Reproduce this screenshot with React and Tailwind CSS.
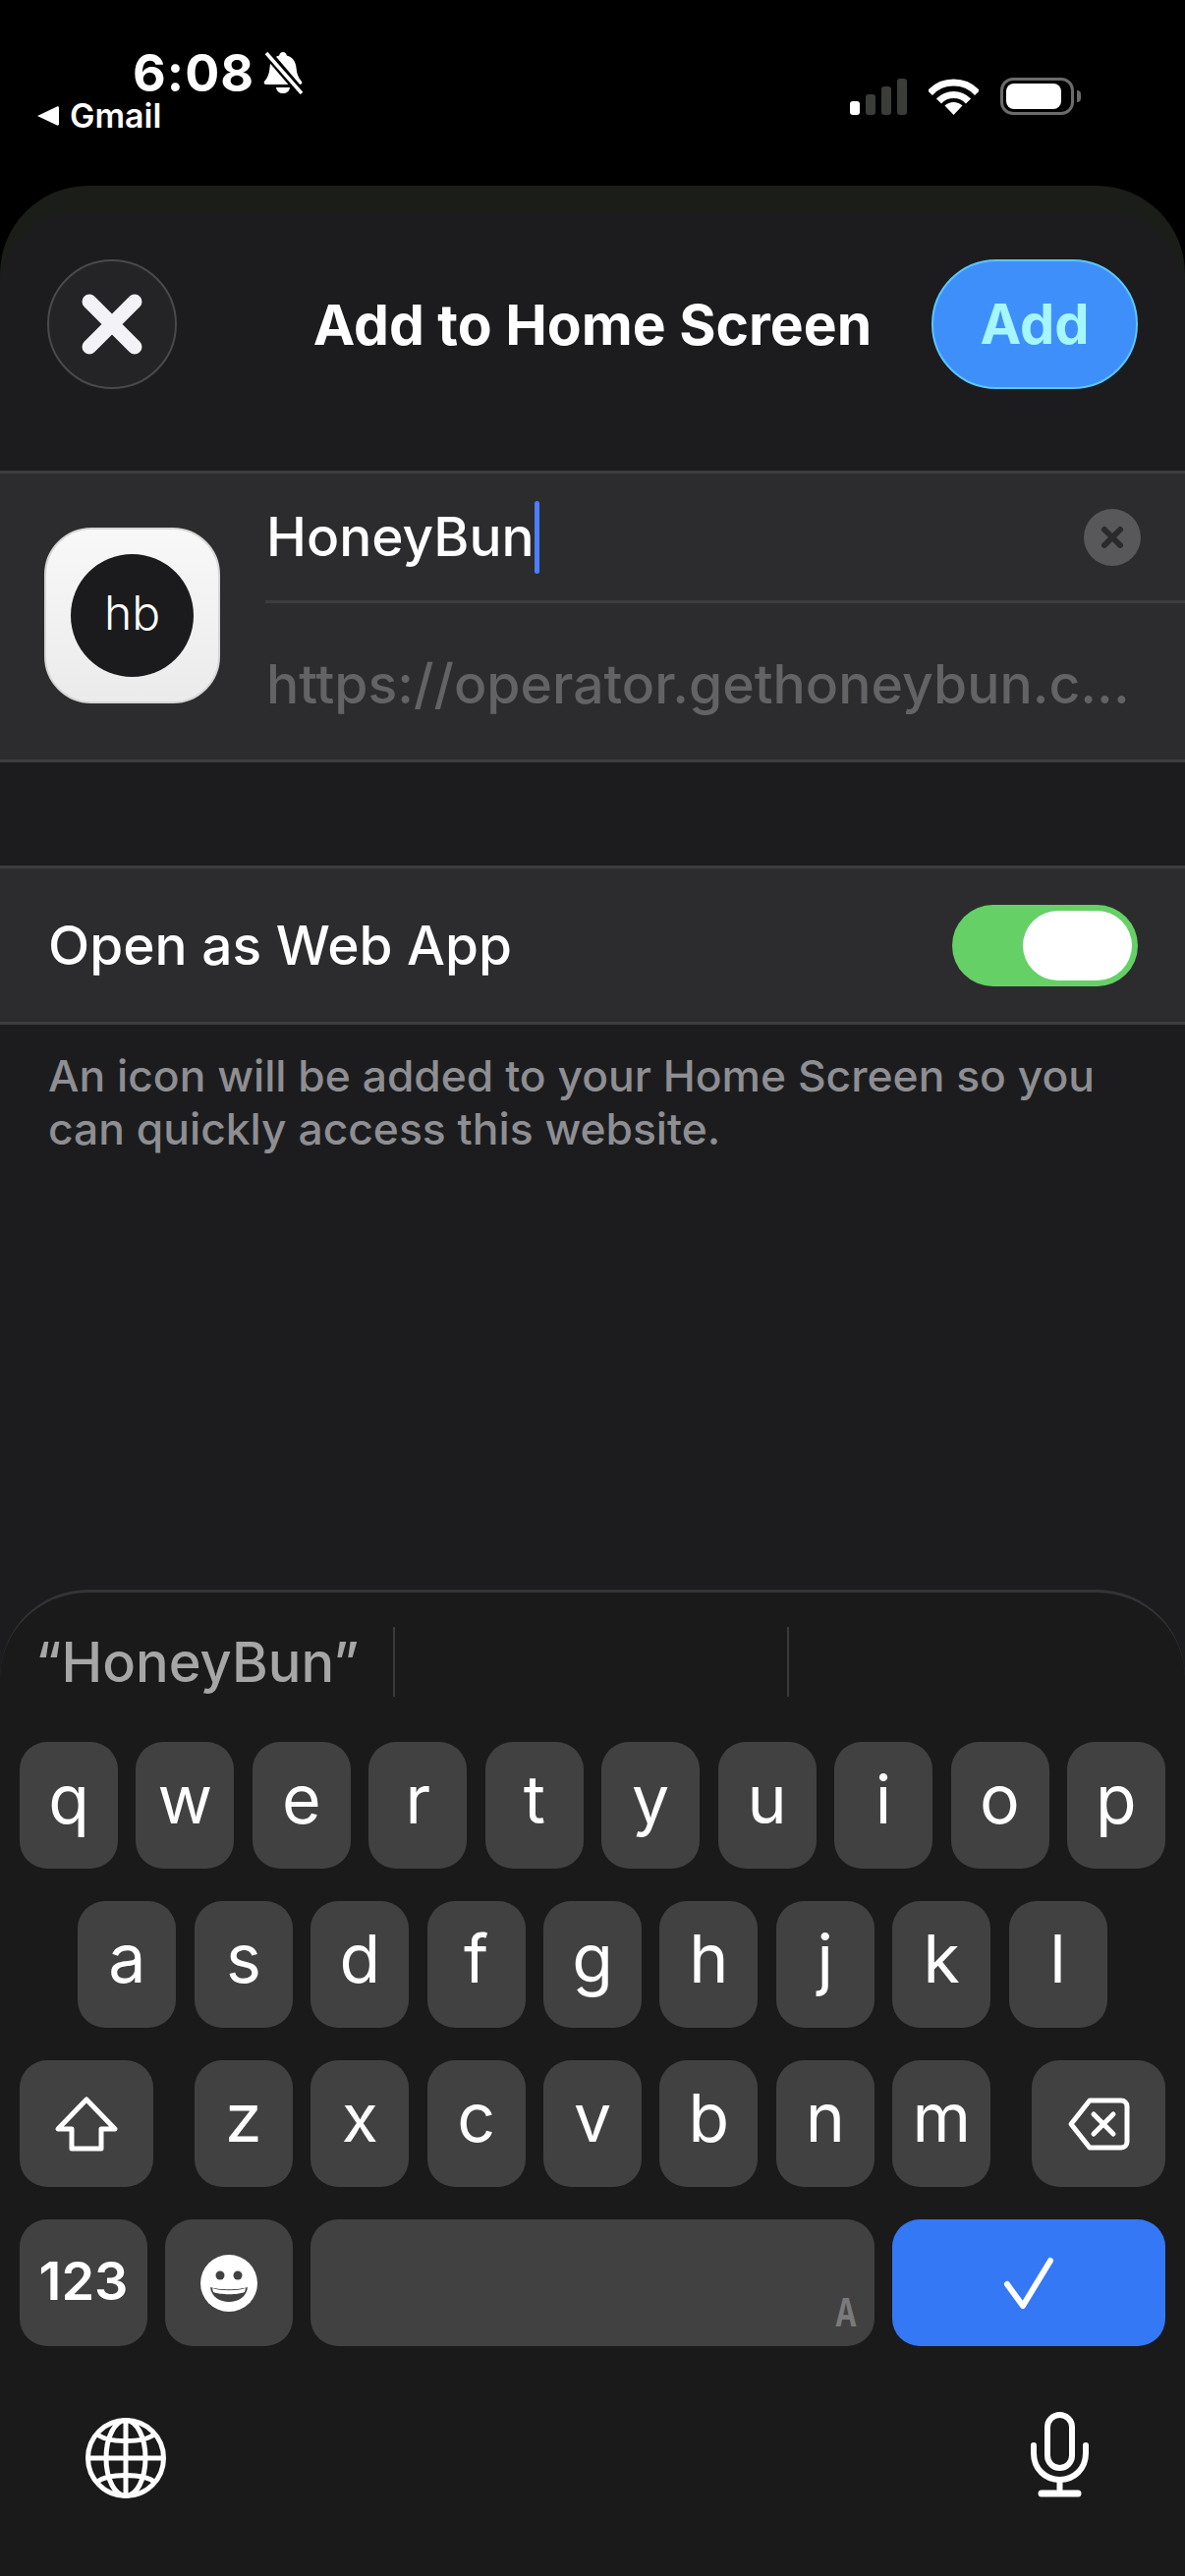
const rowOne = ["q", "w", "e", "r", "t", "y", "u", "i", "o", "p"];
const rowTwo = ["a", "s", "d", "f", "g", "h", "j", "k", "l"];
const rowThree = ["z", "x", "c", "v", "b", "n", "m"];

function Key({ label }) {
  return (
    <div className="w-[100px] h-[129px] rounded-[28px] bg-[#414141] text-white text-[68px] leading-none flex items-center justify-center pb-[13px]">
      {label}
    </div>
  );
}

function StatusBar() {
  return (
    <div className="h-[189px] shrink-0 bg-black flex justify-between pl-[38px] pr-[106px] text-white">
      <div className="flex flex-col">
        <div className="flex items-center pl-[97px] mt-[50px] h-[50px]">
          <span className="text-[52px] leading-none font-bold tracking-[1px]">6:08</span>
          <svg width="42" height="44" viewBox="0 0 42 44" className="ml-[8px] -mt-[2px]">
            <path d="M21 1c2 0 3.500 1.500 3.800 3.500C31 6 34 11 34.500 17c.5 6 2 10 5.500 14 1 1.500 0 3-2 3H4c-2 0-3-1.500-2-3 3.500-4 5-8 5.500-14C8 11 11 6 17.200 4.500 17.500 2.500 19 1 21 1z" fill="white" />
            <path d="M14 37h14c-.5 4-3.500 6-7 6s-6.500-2-7-6z" fill="white" />
            <path d="M4 1l36 42" stroke="black" strokeWidth="9" />
            <path d="M4 2l36 41" stroke="white" strokeWidth="3.500" />
          </svg>
        </div>
        <div className="flex items-center mt-[1px]">
          <svg width="22" height="20" viewBox="0 0 22 20">
            <path d="M0 10L20 0.500C21 0 22 .5 22 2V18C22 19.500 21 20 20 19.500z" fill="white" />
          </svg>
          <span className="ml-[11px] text-[34px] leading-none font-semibold">Gmail</span>
        </div>
      </div>
      <div className="flex items-end h-[117px] pb-0">
        <div className="flex items-end gap-[6px]">
          <div className="w-[10px] h-[14px] rounded-[3px] bg-white" />
          <div className="w-[10px] h-[21px] rounded-[3px] bg-[#3a3d38]" />
          <div className="w-[10px] h-[29px] rounded-[3px] bg-[#3a3d38]" />
          <div className="w-[10px] h-[37px] rounded-[3px] bg-[#3a3d38]" />
        </div>
        <svg width="51" height="37" viewBox="0 0 51 37" className="ml-[22px]">
          <path d="M1.400 14.500A33 33 0 0 1 49.600 14.500" fill="none" stroke="white" strokeWidth="7" />
          <path d="M10.500 23A20.500 20.500 0 0 1 40.500 23" fill="none" stroke="white" strokeWidth="7" />
          <path d="M25.500 37L16.500 27.500A13 13 0 0 1 34.500 27.500z" fill="white" />
        </svg>
        <div className="ml-[22px] w-[75px] h-[38px] rounded-[13px] border-[3px] border-[#6b6b6b] p-[3px]">
          <div className="h-full w-[56px] rounded-[8px] bg-white" />
        </div>
        <div className="ml-[3px] mb-[13px] w-[4px] h-[12px] rounded-r-[4px] bg-[#6b6b6b]" />
      </div>
    </div>
  );
}

function Header() {
  return (
    <div className="mt-[48px] h-[132px] px-[48px] flex items-center">
      <div className="w-[132px] h-[132px] shrink-0 rounded-full bg-[#242426] border-2 border-[#4a4a4d] flex items-center justify-center">
        <svg width="62" height="62" viewBox="0 0 62 62">
          <path d="M8 8L54 54M54 8L8 54" stroke="#f2f2f7" strokeWidth="15" strokeLinecap="round" />
        </svg>
      </div>
      <div className="flex-1 pl-[78px] text-center text-white text-[57px] leading-none font-bold whitespace-nowrap">Add to Home Screen</div>
      <div className="w-[210px] h-[132px] shrink-0 rounded-full bg-[#3f8ffa] border-2 border-[#5ac8fa] flex items-center justify-center text-[#a5f7ff] text-[56px] leading-none font-bold">
        Add
      </div>
    </div>
  );
}

function NameSection() {
  return (
    <div className="mt-[83px] h-[297px] bg-[#2c2c2e] border-y-[3px] border-[#3d3d40] flex">
      <div className="ml-[45px] mt-[55px] w-[179px] h-[179px] rounded-[48px] bg-linear-to-b from-[#f8f8f8] to-[#ebebeb] border-2 border-[#d6d6d6] flex items-center justify-center">
        <div className="w-[125px] h-[125px] rounded-full bg-[#1b1b1d] flex items-center justify-center pb-[5px] text-white text-[48px] font-light leading-none">
          hb
        </div>
      </div>
      <div className="ml-[46px] flex-1 flex flex-col">
        <div className="h-[132px] flex items-center justify-between pl-[1px] pr-[45px] border-b-[3px] border-[#3d3d40]">
          <div className="flex items-center">
            <span className="text-white text-[55px] leading-none font-medium">HoneyBun</span>
            <div className="w-[5px] h-[74px] rounded-full bg-[#4a7fff]" />
          </div>
          <div className="w-[58px] h-[58px] rounded-full bg-[#58585b] flex items-center justify-center">
            <svg width="26" height="26" viewBox="0 0 26 26">
              <path d="M5 5L21 21M21 5L5 21" stroke="#2a2a2c" strokeWidth="6" strokeLinecap="round" />
            </svg>
          </div>
        </div>
        <div className="flex-1 flex items-center pl-[1px] pt-[4px] text-[#636366] text-[55.300px] leading-none font-medium whitespace-nowrap">
          https://operator.gethoneybun.c...
        </div>
      </div>
    </div>
  );
}

function WebAppSection() {
  return (
    <>
      <div className="mt-[105px] h-[162px] bg-[#2c2c2e] border-y-[3px] border-[#3d3d40] flex items-center justify-between pl-[49px] pr-[48px]">
        <span className="text-white text-[55px] leading-none font-medium">Open as Web App</span>
        <div className="w-[189px] h-[83px] rounded-full bg-[#65d066] flex items-center justify-end pr-[6px]">
          <div className="w-[111px] h-[71px] rounded-full bg-white" />
        </div>
      </div>
      <p className="mt-[25px] px-[49px] text-[#8e8e93] text-[44.400px] leading-[54px] font-medium whitespace-pre-line">
        {"An icon will be added to your Home Screen so you\ncan quickly access this website."}
      </p>
    </>
  );
}

function Keyboard() {
  return (
    <div className="mt-auto h-[1004px] rounded-t-[90px] border-t-[3px] border-[#333436] bg-[#1a1a1a] flex flex-col">
      <div className="mt-[35px] h-[71px] flex">
        <div className="w-[402px] border-r-2 border-[#3a3a3a] flex items-center pl-[36px] text-[#a6a6a6] text-[56px] leading-none font-medium">
          “HoneyBun”
        </div>
        <div className="w-[401px] border-r-2 border-[#3a3a3a]" />
      </div>
      <div className="mt-[46px] px-[20px] flex flex-col gap-[33px]">
        <div className="flex justify-between">
          {rowOne.map((k) => (
            <Key key={k} label={k} />
          ))}
        </div>
        <div className="flex justify-center gap-[18.4px]">
          {rowTwo.map((k) => (
            <Key key={k} label={k} />
          ))}
        </div>
        <div className="flex justify-between">
          <div className="w-[136px] h-[129px] rounded-[28px] bg-[#414141] flex items-center justify-center">
            <svg width="66" height="58" viewBox="0 0 66 58">
              <path d="M33 4L4 34H18V54H48V34H62z" fill="none" stroke="white" strokeWidth="5" strokeLinejoin="round" />
            </svg>
          </div>
          <div className="flex gap-[18.4px]">
            {rowThree.map((k) => (
              <Key key={k} label={k} />
            ))}
          </div>
          <div className="w-[136px] h-[129px] rounded-[28px] bg-[#414141] flex items-center justify-center">
            <svg width="66" height="56" viewBox="0 0 66 56">
              <path d="M24 4H56a6 6 0 0 1 6 6V46a6 6 0 0 1-6 6H24L5 28z" fill="none" stroke="white" strokeWidth="5" strokeLinejoin="round" />
              <path d="M28 18L48 38M48 18L28 38" stroke="white" strokeWidth="5" strokeLinecap="round" />
            </svg>
          </div>
        </div>
        <div className="flex gap-[18px]">
          <div className="w-[130px] h-[129px] rounded-[28px] bg-[#414141] text-white text-[54px] leading-none font-semibold flex items-center justify-center pb-[4px]">
            123
          </div>
          <div className="w-[130px] h-[129px] rounded-[28px] bg-[#414141] flex items-center justify-center">
            <svg width="58" height="58" viewBox="0 0 58 58">
              <circle cx="29" cy="29" r="29" fill="white" />
              <circle cx="20" cy="21" r="4.500" fill="#414141" />
              <circle cx="38" cy="21" r="4.500" fill="#414141" />
              <path d="M10 33C18 36 40 36 48 33C47 43 38 48 29 48S11 43 10 33z" fill="#414141" />
              <path d="M12 34C20 37 38 37 46 34L45 38C38 41 20 41 13 38z" fill="white" />
            </svg>
          </div>
          <div className="relative w-[574px] h-[129px] rounded-[28px] bg-[#414141]">
            <span className="absolute right-[14px] bottom-[14px] text-[#7a7a7a] text-[40px] leading-none font-bold scale-x-75">A</span>
          </div>
          <div className="w-[278px] h-[129px] rounded-[28px] bg-[#3478f6] flex items-center justify-center">
            <svg width="52" height="54" viewBox="0 0 52 54">
              <path d="M4 28L20 50L48 4" fill="none" stroke="white" strokeWidth="6" strokeLinecap="round" strokeLinejoin="round" />
            </svg>
          </div>
        </div>
      </div>
      <div className="flex justify-between items-start pl-[87px] pr-[97px] mt-[67px]">
        <svg width="82" height="82" viewBox="0 0 82 82" className="mt-[6px]" fill="none" stroke="white" strokeWidth="5">
          <circle cx="41" cy="41" r="38.500" />
          <ellipse cx="41" cy="41" rx="20" ry="38.500" />
          <path d="M41 3V79M3 41H79" />
          <path d="M11 16C22 26 60 26 71 16M11 66C22 56 60 56 71 66" />
        </svg>
        <svg width="61" height="87" viewBox="0 0 61 87" fill="none" stroke="white" strokeWidth="6" strokeLinecap="round">
          <rect x="18" y="3" width="25" height="54" rx="12.500" />
          <path d="M4 34V42C4 58 16 69 30.500 69S57 58 57 42V34" />
          <path d="M30.500 69V83" />
          <path d="M12 83H49" strokeWidth="7" />
        </svg>
      </div>
    </div>
  );
}

export default function App() {
  return (
    <div className="w-[1206px] h-[2622px] bg-black flex flex-col overflow-hidden font-[Inter,sans-serif]">
      <StatusBar />
      <div className="flex-1 flex flex-col rounded-t-[90px] bg-[#1b1d19] pt-[27px]">
        <div className="flex-1 flex flex-col rounded-t-[80px] bg-[#1c1c1e]">
          <Header />
          <NameSection />
          <WebAppSection />
          <Keyboard />
        </div>
      </div>
    </div>
  );
}
